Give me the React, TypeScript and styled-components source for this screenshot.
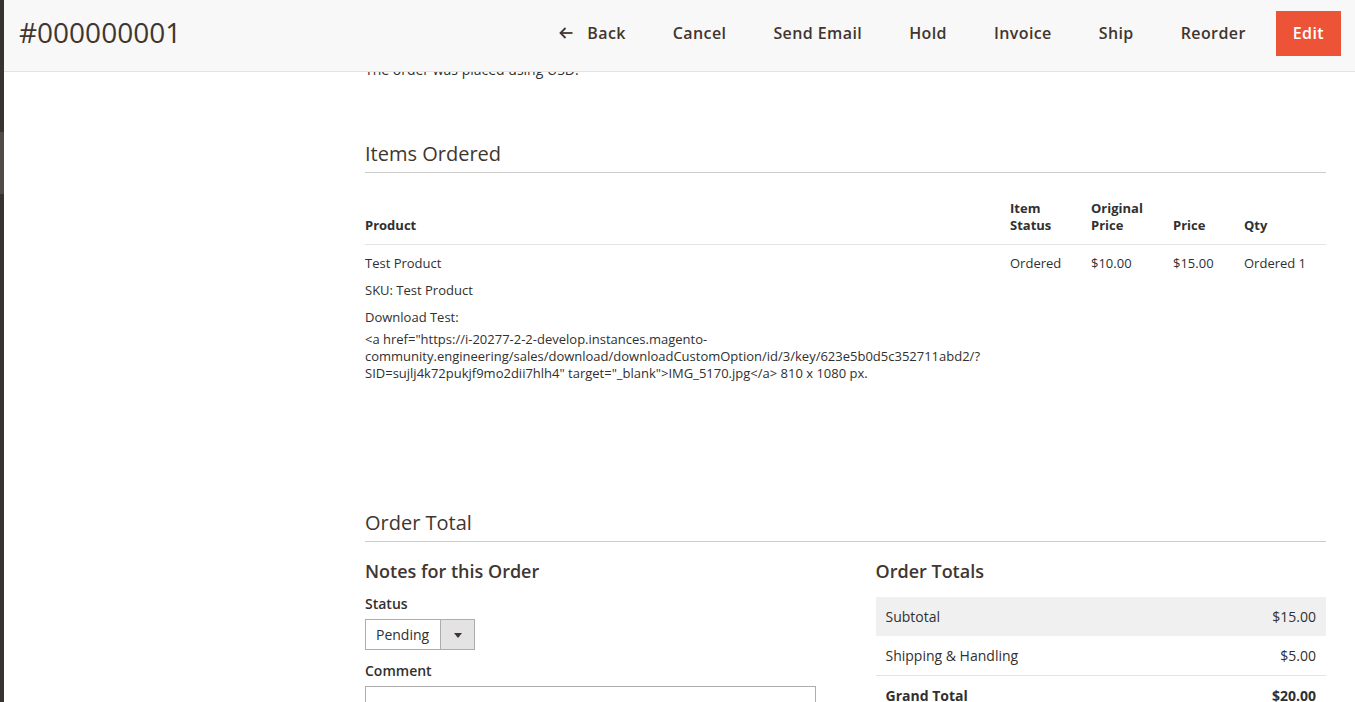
import styled, { createGlobalStyle, css } from "styled-components";

const GlobalStyle = createGlobalStyle`
  * { box-sizing: border-box; }
  html, body {
    margin: 0;
    padding: 0;
    height: 100%;
    overflow: hidden;
    background: #ffffff;
  }
  body {
    font-family: "Open Sans", "Liberation Sans", Arial, sans-serif;
    font-size: 14px;
    color: #303030;
  }
`;

const Page = styled.div`
  display: flex;
  height: 100vh;
`;

const MenuStrip = styled.div`
  flex: none;
  width: 4px;
  background: #373330;
  display: flex;
  flex-direction: column;
`;

const MenuActive = styled.div`
  margin-top: 132px;
  height: 62px;
  background: #514a45;
`;

const Main = styled.div`
  flex: 1;
  position: relative;
  overflow: hidden;
`;

const PageHeader = styled.header`
  position: absolute;
  top: 0;
  left: 0;
  right: 0;
  z-index: 2;
  height: 72px;
  display: flex;
  align-items: center;
  padding: 0 14px 4px 15px;
  background: #f8f8f8;
  border-bottom: 1px solid #e3e3e3;
`;

const PageTitle = styled.h1`
  flex: 1;
  margin: -2px 0 0;
  font-size: 28px;
  line-height: 1.15;
  font-weight: 400;
  color: #41362f;
`;

const Actions = styled.div`
  display: flex;
  align-items: center;
  gap: 13px;
`;

const ActionButton = styled.button<{ $primary?: boolean }>`
  display: inline-flex;
  align-items: center;
  gap: 14px;
  padding: 10px 16px 11px;
  border: 1px solid transparent;
  background: transparent;
  font-family: inherit;
  font-size: 16px;
  line-height: 22px;
  font-weight: 600;
  letter-spacing: 0.025em;
  color: #41362f;
  cursor: pointer;
  ${(p) =>
    p.$primary &&
    css`
      background: #ec5337;
      border-color: #ec5337;
      color: #ffffff;
    `}
`;

const BackArrow = () => (
  <svg width="14" height="12" viewBox="0 0 14 12" fill="none">
    <path d="M1.5 6H13.5" stroke="#41362f" strokeWidth="1.8" />
    <path d="M6.5 1L1.5 6L6.5 11" stroke="#41362f" strokeWidth="1.8" />
  </svg>
);

const Layout = styled.div`
  display: grid;
  grid-template-columns: 361px 1fr;
  padding-right: 29px;
`;

const TabsColumn = styled.aside``;

const ContentColumn = styled.div`
  padding-top: 60px;
`;

const Notice = styled.p`
  margin: 0;
  font-size: 14px;
  line-height: 20px;
`;

const Section = styled.section<{ $gap: number }>`
  margin-top: ${(p) => p.$gap}px;
`;

const SectionTitle = styled.h2`
  margin: 0;
  padding-bottom: 6px;
  border-bottom: 1px solid #cccccc;
  font-size: 20px;
  line-height: 24px;
  font-weight: 400;
  color: #41362f;
`;

const ItemsTable = styled.table`
  width: 100%;
  margin-top: 17px;
  table-layout: fixed;
  border-collapse: collapse;

  th {
    padding: 10px 10px 10px 0;
    border-bottom: 1px solid #e3e3e3;
    text-align: left;
    vertical-align: bottom;
    font-size: 13px;
    line-height: 17px;
    font-weight: 700;
    color: #303030;
  }

  td {
    padding: 10px 10px 10px 0;
    vertical-align: top;
    font-size: 13px;
    line-height: 17px;
  }
`;

const ProductCell = styled.td`
  && {
    padding-right: 30px;
  }
`;

const ProductLine = styled.div`
  margin-bottom: 10px;
`;

const OptionList = styled.dl`
  margin: 0;
`;

const OptionLabel = styled.dt`
  margin-bottom: 5px;
`;

const OptionValue = styled.dd`
  margin: 0;
`;

const TotalsGrid = styled.div`
  display: grid;
  grid-template-columns: 1fr 1fr;
  column-gap: 60px;
  margin-top: 18px;
`;

const BlockTitle = styled.h3`
  margin: 0 0 12px;
  font-size: 18px;
  line-height: 22px;
  font-weight: 600;
  color: #41362f;
`;

const FieldLabel = styled.label`
  display: block;
  margin-bottom: 5px;
  font-size: 14px;
  line-height: 20px;
  font-weight: 600;
  color: #303030;
`;

const SelectBox = styled.div`
  display: flex;
  width: 110px;
  height: 31px;
  margin-bottom: 11px;
  border: 1px solid #adadad;
  background: #ffffff;
`;

const NativeSelect = styled.select`
  flex: 1;
  min-width: 0;
  appearance: none;
  border: none;
  background: transparent;
  padding: 0 0 0 10px;
  font-family: inherit;
  font-size: 14px;
  color: #303030;
  outline: none;
`;

const SelectArrow = styled.span`
  flex: none;
  width: 34px;
  display: flex;
  align-items: center;
  justify-content: center;
  background: #e3e3e3;
  border-left: 1px solid #adadad;

  &::after {
    content: "";
    border-left: 4px solid transparent;
    border-right: 4px solid transparent;
    border-top: 5px solid #41362f;
    margin-top: 2px;
  }
`;

const CommentArea = styled.textarea`
  display: block;
  width: 100%;
  height: 100px;
  border: 1px solid #adadad;
  resize: none;
  font-family: inherit;
`;

const TotalsTable = styled.table`
  width: 100%;
  margin-top: 15px;
  border-collapse: collapse;

  td {
    padding: 10px 10px 9px;
    font-size: 14px;
    line-height: 20px;
  }
  td:last-child {
    text-align: right;
  }
`;

const TotalsRow = styled.tr<{ $shade?: boolean; $rule?: boolean; $strong?: boolean }>`
  background: ${(p) => (p.$shade ? "#f0f0f0" : "transparent")};
  border-bottom: ${(p) => (p.$rule ? "1px solid #e3e3e3" : "none")};
  font-weight: ${(p) => (p.$strong ? 700 : 400)};
`;

const headerActions = ["Cancel", "Send Email", "Hold", "Invoice", "Ship", "Reorder"];

const optionValue =
  '<a href="https://i-20277-2-2-develop.instances.magento-community.engineering/sales/download/downloadCustomOption/id/3/key/623e5b0d5c352711abd2/?SID=sujlj4k72pukjf9mo2dii7hlh4" target="_blank">IMG_5170.jpg</a> 810 x 1080 px.';

export default function App() {
  return (
    <>
      <GlobalStyle />
      <Page>
        <MenuStrip>
          <MenuActive />
        </MenuStrip>
        <Main>
          <PageHeader>
            <PageTitle>#000000001</PageTitle>
            <Actions>
              <ActionButton>
                <BackArrow />
                Back
              </ActionButton>
              {headerActions.map((label) => (
                <ActionButton key={label}>{label}</ActionButton>
              ))}
              <ActionButton $primary>Edit</ActionButton>
            </Actions>
          </PageHeader>

          <Layout>
            <TabsColumn />
            <ContentColumn>
              <Notice>The order was placed using USD.</Notice>

              <Section $gap={62}>
                <SectionTitle>Items Ordered</SectionTitle>
                <ItemsTable>
                  <colgroup>
                    <col style={{ width: 645 }} />
                    <col style={{ width: 81 }} />
                    <col style={{ width: 82 }} />
                    <col style={{ width: 71 }} />
                    <col style={{ width: 82 }} />
                  </colgroup>
                  <thead>
                    <tr>
                      <th>Product</th>
                      <th>
                        Item
                        <br />
                        Status
                      </th>
                      <th>
                        Original
                        <br />
                        Price
                      </th>
                      <th>Price</th>
                      <th>Qty</th>
                    </tr>
                  </thead>
                  <tbody>
                    <tr>
                      <ProductCell>
                        <ProductLine>Test Product</ProductLine>
                        <ProductLine>SKU: Test Product</ProductLine>
                        <OptionList>
                          <OptionLabel>Download Test:</OptionLabel>
                          <OptionValue>{optionValue}</OptionValue>
                        </OptionList>
                      </ProductCell>
                      <td>Ordered</td>
                      <td>$10.00</td>
                      <td>$15.00</td>
                      <td>Ordered 1</td>
                    </tr>
                  </tbody>
                </ItemsTable>
              </Section>

              <Section $gap={119}>
                <SectionTitle>Order Total</SectionTitle>
                <TotalsGrid>
                  <div>
                    <BlockTitle>Notes for this Order</BlockTitle>
                    <FieldLabel>Status</FieldLabel>
                    <SelectBox>
                      <NativeSelect defaultValue="pending">
                        <option value="pending">Pending</option>
                      </NativeSelect>
                      <SelectArrow />
                    </SelectBox>
                    <FieldLabel>Comment</FieldLabel>
                    <CommentArea />
                  </div>
                  <div>
                    <BlockTitle>Order Totals</BlockTitle>
                    <TotalsTable>
                      <tbody>
                        <TotalsRow $shade>
                          <td>Subtotal</td>
                          <td>$15.00</td>
                        </TotalsRow>
                        <TotalsRow $rule>
                          <td>Shipping &amp; Handling</td>
                          <td>$5.00</td>
                        </TotalsRow>
                        <TotalsRow $strong>
                          <td>Grand Total</td>
                          <td>$20.00</td>
                        </TotalsRow>
                      </tbody>
                    </TotalsTable>
                  </div>
                </TotalsGrid>
              </Section>
            </ContentColumn>
          </Layout>
        </Main>
      </Page>
    </>
  );
}
